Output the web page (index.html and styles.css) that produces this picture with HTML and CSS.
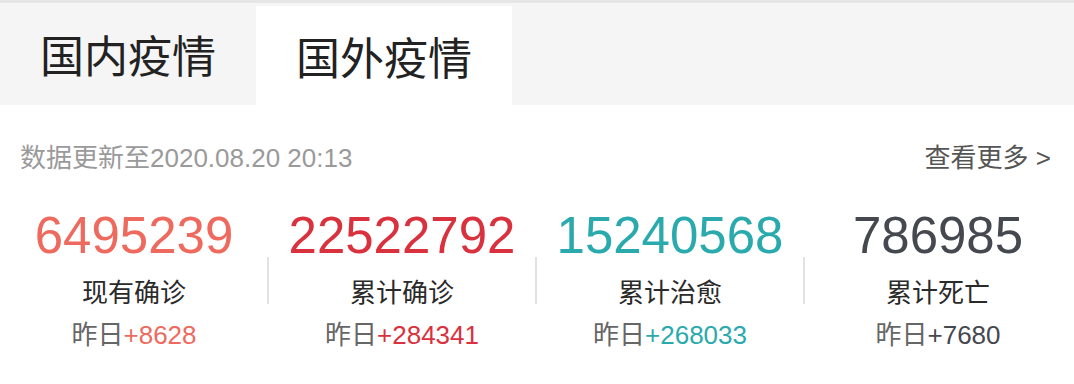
FILE: index.html
```html
<!DOCTYPE html>
<html lang="zh-CN">
<head>
    <meta charset="UTF-8">
    <meta name="viewport" content="width=device-width, initial-scale=1.0">
    <title>疫情数据</title>
    <link rel="stylesheet" href="styles.css">
</head>
<body>
    <div class="tabs">
        <div class="tab">国内疫情</div>
        <div class="tab active">国外疫情</div>
    </div>
    <div class="info">
        <div class="update-time">数据更新至2020.08.20 20:13</div>
        <div class="more">查看更多 &gt;</div>
    </div>
    <div class="stats">
        <div class="stat now">
            <div class="stat-num">6495239</div>
            <div class="stat-label">现有确诊</div>
            <div class="stat-add">昨日<span>+8628</span></div>
        </div>
        <div class="stat total">
            <div class="stat-num">22522792</div>
            <div class="stat-label">累计确诊</div>
            <div class="stat-add">昨日<span>+284341</span></div>
        </div>
        <div class="stat cured">
            <div class="stat-num">15240568</div>
            <div class="stat-label">累计治愈</div>
            <div class="stat-add">昨日<span>+268033</span></div>
        </div>
        <div class="stat dead">
            <div class="stat-num">786985</div>
            <div class="stat-label">累计死亡</div>
            <div class="stat-add">昨日<span>+7680</span></div>
        </div>
    </div>
</body>
</html>
```

FILE: styles.css
```css
body {
    margin: 0;
    background-color: #fff;
    font-family: "Liberation Sans", "Noto Sans CJK SC", sans-serif;
    border-top: 3px solid #e6e6e6;
}
.tabs {
    display: flex;
    height: 102px;
    background-color: #f5f5f5;
}
.tab {
    width: 256px;
    display: flex;
    justify-content: center;
    align-items: center;
    font-size: 44px;
    color: #222;
}
.tab.active {
    margin-top: 3px;
    background-color: #fff;
}
.info {
    display: flex;
    justify-content: space-between;
    margin-top: 38px;
    padding: 0 23px 0 20px;
    font-size: 26px;
    line-height: 30px;
}
.update-time {
    color: #9a9a9a;
}
.more {
    color: #555;
}
.stats {
    display: grid;
    grid-template-columns: repeat(4, 268px);
    margin-top: 35px;
    text-align: center;
}
.stat {
    position: relative;
}
.stat + .stat::before {
    content: "";
    position: absolute;
    left: -1px;
    top: 49px;
    height: 47px;
    width: 2px;
    background-color: #e2e2e2;
}
.stat-num {
    font-size: 51px;
    line-height: 56px;
}
.stat-label {
    margin-top: 12px;
    font-size: 26px;
    line-height: 34px;
    color: #2a2a2a;
}
.stat-add {
    margin-top: 10px;
    font-size: 26px;
    line-height: 30px;
    color: #666;
}
.now .stat-num, .now .stat-add span {
    color: #ee6a5e;
}
.total .stat-num, .total .stat-add span {
    color: #d9313d;
}
.cured .stat-num, .cured .stat-add span {
    color: #2aaaad;
}
.dead .stat-num, .dead .stat-add span {
    color: #45484e;
}
```
